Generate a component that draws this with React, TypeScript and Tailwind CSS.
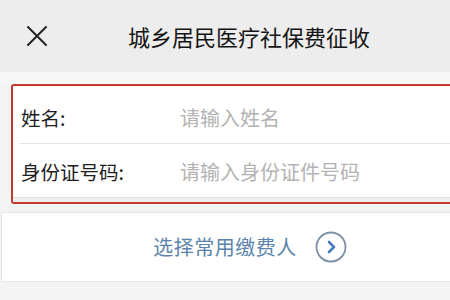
import React from "react";

export default function App() {
  return (
    <div
      className="w-[450px] h-[300px] overflow-hidden bg-[#f3f3f3] flex flex-col"
      style={{ fontFamily: '"Noto Sans CJK SC", "Noto Sans", sans-serif' }}
    >
      {/* Header */}
      <div className="h-[72px] shrink-0 bg-[#ededed] flex items-center pl-[26px]">
        <svg width="22" height="22" viewBox="0 0 22 22" className="shrink-0">
          <path d="M2 2 L20 20 M20 2 L2 20" stroke="#222" strokeWidth="2" strokeLinecap="round" />
        </svg>
        <div className="ml-[80px] text-[22px] leading-none tracking-normal text-[#141414] font-normal whitespace-nowrap">
          城乡居民医疗社保费征收
        </div>
      </div>
      <div className="h-[12px] shrink-0 bg-[#f7f7f7]" />

      {/* Highlighted form */}
      <div className="ml-[11px] mr-[-6px] shrink-0 border-2 border-[#c23a2e] rounded-[3px] bg-white flex flex-col">
        <div className="h-[57px] flex items-center pt-[6px] pl-[8px]">
          <span className="w-[159px] text-[19.5px] text-[#1e1e1e] leading-none">姓名:</span>
          <span className="text-[20px] text-[#b3b3b3] leading-none">请输入姓名</span>
        </div>
        <div className="ml-[6px] h-px bg-[#e6e6e6]" />
        <div className="h-[53px] flex items-center pt-[3px] pl-[8px]">
          <span className="w-[159px] text-[19.5px] text-[#1e1e1e] leading-none">身份证号码:</span>
          <span className="text-[20px] text-[#b3b3b3] leading-none">请输入身份证件号码</span>
        </div>
        <div className="h-[5px] bg-[#efefef] border-t border-[#e2e2e2]" />
      </div>

      <div className="h-[8px] shrink-0" />

      {/* Select common payer */}
      <div className="h-[70px] shrink-0 bg-white border-y border-l border-[#e6e6e6] ml-px flex items-center justify-center pl-[48px]">
        <span className="text-[20px] text-[#5a84ad] leading-none tracking-[0.5px]">选择常用缴费人</span>
        <svg width="32" height="32" viewBox="0 0 32 32" className="ml-[18px] shrink-0">
          <circle cx="16" cy="16" r="14.5" fill="none" stroke="#7d8fa6" strokeWidth="1.8" />
          <path d="M14 11 L19 16 L14 21" fill="none" stroke="#4a7dc0" strokeWidth="2.6" strokeLinecap="round" strokeLinejoin="round" />
        </svg>
      </div>
    </div>
  );
}
